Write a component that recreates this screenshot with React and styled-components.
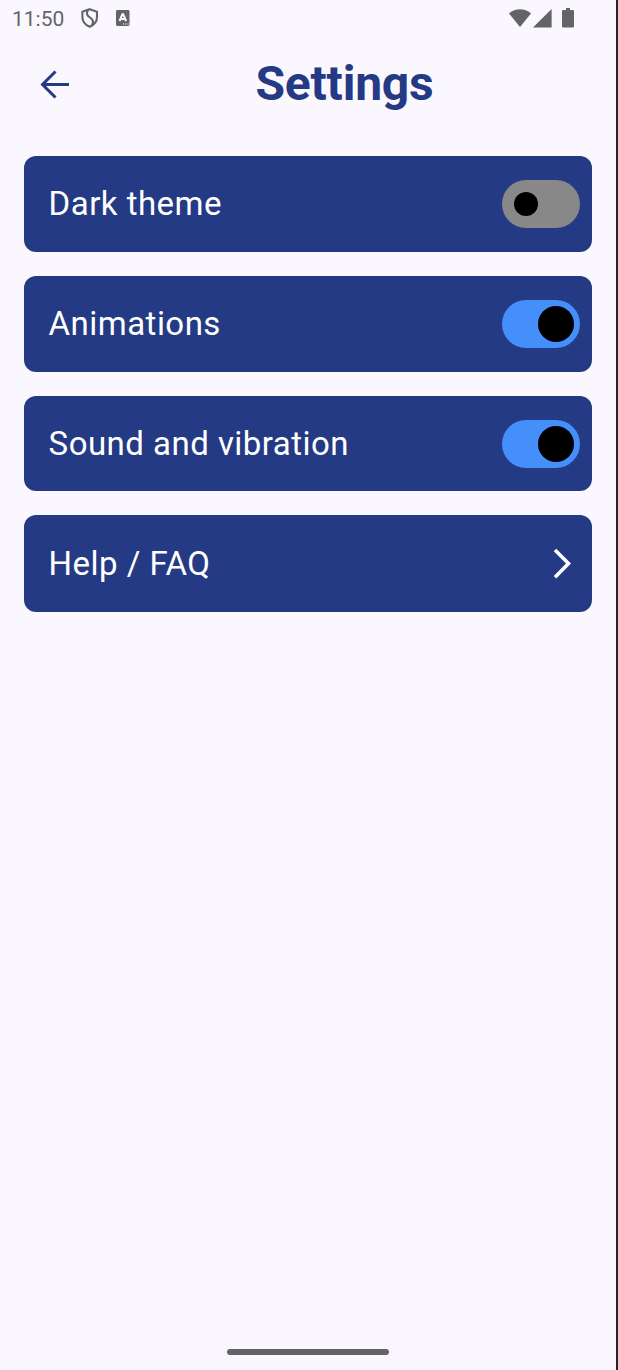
import React from "react";
import styled, { createGlobalStyle } from "styled-components";

const GlobalStyle = createGlobalStyle`
  * { box-sizing: border-box; }
  body { margin: 0; background: #faf7ff; }
`;

const Screen = styled.div`
  display: flex;
  flex-direction: column;
  width: 618px;
  height: 1370px;
  border-right: 2px solid #212429;
  background: #faf7ff;
  font-family: Roboto, sans-serif;
  overflow: hidden;
`;

const StatusBar = styled.div`
  display: flex;
  justify-content: space-between;
  height: 36px;
  padding: 0 42px 0 12px;
  color: #646466;
`;

const StatusGroup = styled.div`
  display: flex;
  align-items: center;
`;

const Clock = styled.span`
  width: 68px;
  padding-top: 2px;
  font-size: 21px;
  line-height: 36px;
  white-space: nowrap;
`;

const Glyph = styled.svg`
  display: block;
  flex: none;
  margin-left: ${(p) => p.$gap || 0}px;
`;

const Header = styled.header`
  display: flex;
  align-items: center;
  height: 96px;
  padding: 0 24px 0 36px;
  color: #253a84;
`;

const BackButton = styled.button`
  display: flex;
  padding: 0;
  border: 0;
  background: none;
  color: inherit;
`;

const Title = styled.h1`
  flex: 1;
  margin: 0;
  padding-left: 25px;
  font-size: 48px;
  line-height: 60px;
  font-weight: 700;
  letter-spacing: -0.2px;
  text-align: center;
`;

const SettingsList = styled.main`
  display: flex;
  flex-direction: column;
  gap: 23.9px;
  padding: 24px 24px 0;
`;

const Row = styled.div`
  display: flex;
  align-items: center;
  justify-content: space-between;
  height: ${(p) => (p.$link ? 96.6 : 95.9)}px;
  padding: 0 12px 0 24.6px;
  border-radius: 12px;
  background: #253a84;
`;

const Label = styled.span`
  color: #fff;
  font-size: 33px;
  line-height: 48px;
  letter-spacing: 0.47px;
`;

const Switch = styled.button`
  display: flex;
  align-items: center;
  justify-content: ${(p) => (p.$on ? "flex-end" : "flex-start")};
  width: 78px;
  height: 48px;
  padding: 0 ${(p) => (p.$on ? 6 : 12)}px;
  border: 0;
  border-radius: 24px;
  background: ${(p) => (p.$on ? "#448ff9" : "#888888")};
`;

const Thumb = styled.span`
  width: ${(p) => (p.$on ? 36 : 24)}px;
  height: ${(p) => (p.$on ? 36 : 24)}px;
  border-radius: 50%;
  background: #000;
`;

const HomeArea = styled.footer`
  display: flex;
  justify-content: center;
  margin-top: auto;
  padding-bottom: 15px;
`;

const HomeHandle = styled.div`
  width: 162px;
  height: 6px;
  border-radius: 3px;
  background: #646466;
`;

function Toggle({ on, label }) {
  return (
    <Switch $on={on} role="switch" aria-checked={on} aria-label={label}>
      <Thumb $on={on} />
    </Switch>
  );
}

const toggles = [
  { label: "Dark theme", on: false },
  { label: "Animations", on: true },
  { label: "Sound and vibration", on: true },
];

export default function App() {
  return (
    <Screen>
      <GlobalStyle />
      <StatusBar>
        <StatusGroup>
          <Clock>11:50</Clock>
          <Glyph width="20" height="22" viewBox="0 0 20 22" fill="none" stroke="currentColor" strokeWidth="2.1">
            <path d="M9.700 2.200 17 4.800V10c0 4.600-2.900 8-7.300 9.700C5.400 18 2.400 14.600 2.400 10V4.800Z" />
            <path d="M8 3.200C6 6.200 6.800 8.500 9.800 10.300c3.300 2 3.900 4.800 2.200 7.900" />
          </Glyph>
          <Glyph $gap={16} width="14" height="16" viewBox="0 0 14 16">
            <rect width="13.500" height="16" rx="1.400" fill="currentColor" />
            <path d="m3.500 11.200 2.900-7h.8l2.900 7M4.800 9h4" fill="none" stroke="#faf7ff" strokeWidth="2.100" />
            <path d="M7 14h1.200m1 0h1.200m1 0h1.200" stroke="#faf7ff" strokeWidth="1.200" />
          </Glyph>
        </StatusGroup>
        <StatusGroup>
          <Glyph width="22" height="19" viewBox="0 0 22 19" fill="currentColor">
            <path d="M0 4.400C6.500-1.200 15.500-1.200 22 4.400L11 18Z" />
          </Glyph>
          <Glyph $gap={2} width="19" height="19" viewBox="0 0 19 19" fill="currentColor">
            <path d="M18.600 0v18.600H0Z" />
          </Glyph>
          <Glyph $gap={10} width="12" height="20" viewBox="0 0 12 20" fill="currentColor">
            <path d="M4 0h4v2h2.800Q12 2 12 3.200v15Q12 19.500 10.800 19.500H1.200Q0 19.500 0 18.200v-15Q0 2 1.200 2H4Z" />
          </Glyph>
        </StatusGroup>
      </StatusBar>
      <Header>
        <BackButton aria-label="Back">
          <Glyph width="36" height="36" viewBox="0 0 36 36" fill="none" stroke="currentColor" strokeWidth="3">
            <path d="M33 18.500H7M19.500 5.500l-13 13 13 13" />
          </Glyph>
        </BackButton>
        <Title>Settings</Title>
      </Header>
      <SettingsList>
        {toggles.map((item) => (
          <Row key={item.label}>
            <Label>{item.label}</Label>
            <Toggle on={item.on} label={item.label} />
          </Row>
        ))}
        <Row $link>
          <Label>Help / FAQ</Label>
          <Glyph width="36" height="36" viewBox="0 0 36 36" fill="none" stroke="#fff" strokeWidth="3.600">
            <path d="M11 4 24.500 17.600 11 31.200" />
          </Glyph>
        </Row>
      </SettingsList>
      <HomeArea>
        <HomeHandle />
      </HomeArea>
    </Screen>
  );
}
